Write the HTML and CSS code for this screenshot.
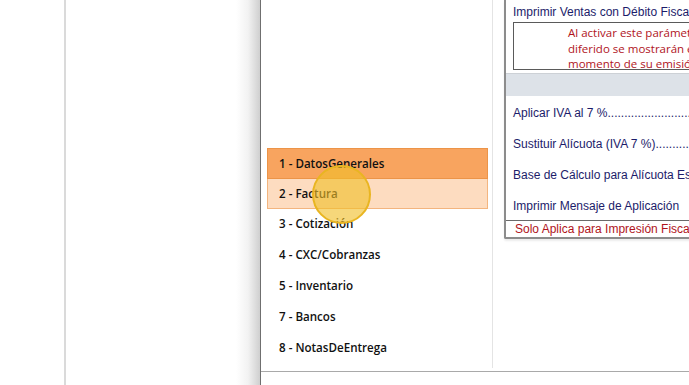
FILE: index.html
```html
<!DOCTYPE html>
<html lang="es">
<head>
    <meta charset="UTF-8">
    <meta name="viewport" content="width=device-width, initial-scale=1.0">
    <title>Configuración</title>
    <link rel="stylesheet" href="styles.css">
</head>
<body>
    <div id="desktop">
        <div id="backdrop">
            <div class="guide"></div>
        </div>
        <div id="window">
            <div id="content">
                <div id="nav">
                    <div id="module-list">
                        <div class="module active">1 - DatosGenerales</div>
                        <div class="module hover">2 - Factura</div>
                        <div class="module">3 - Cotización</div>
                        <div class="module">4 - CXC/Cobranzas</div>
                        <div class="module">5 - Inventario</div>
                        <div class="module">7 - Bancos</div>
                        <div class="module">8 - NotasDeEntrega</div>
                    </div>
                    <div id="cursor"></div>
                </div>
                <div id="settings">
                    <div id="panel">
                        <div class="option title">Imprimir Ventas con Débito Fiscal Diferido</div>
                        <div class="notice">
                            <p>Al activar este parámetro las ventas con débito fiscal</p>
                            <p>diferido se mostrarán en el libro de ventas al</p>
                            <p>momento de su emisión</p>
                        </div>
                        <div class="band"></div>
                        <div class="option row">Aplicar IVA al 7 %..............................................</div>
                        <div class="option row">Sustituir Alícuota (IVA 7 %).................................</div>
                        <div class="option row">Base de Cálculo para Alícuota Especial</div>
                        <div class="option row">Imprimir Mensaje de Aplicación</div>
                        <div class="fiscal-note">Solo Aplica para Impresión Fiscal</div>
                    </div>
                </div>
            </div>
            <div id="footer"></div>
        </div>
    </div>
</body>
</html>
```

FILE: styles.css
```css
body {
    margin: 0;
    background: #ffffff;
    font-family: "Liberation Sans", Arial, sans-serif;
    overflow: hidden;
}
#desktop {
    display: flex;
    height: 385px;
    width: 689px;
    overflow: hidden;
}
#backdrop {
    width: 260px;
    flex-shrink: 0;
    background: linear-gradient(90deg, #ffffff 0, #ffffff 236px, #f2f2f2 248px, #cfcfcf 260px);
}
.guide {
    margin-left: 64px;
    width: 2px;
    height: 100%;
    background: #dadada;
}
#window {
    flex: 1;
    min-width: 0;
    display: flex;
    flex-direction: column;
    border-left: 1px solid #6f6f6f;
    background: #ffffff;
}
#content {
    height: 371px;
    display: flex;
    border-bottom: 1px solid #a9a9a9;
    overflow: hidden;
}
#footer {
    flex: 1;
    background: #ffffff;
}
#nav {
    position: relative;
    width: 232px;
    flex-shrink: 0;
    padding: 148px 4px 0 6px;
    box-sizing: border-box;
    border-right: 1px solid #e4e4e4;
    height: 368px;
}
#module-list {
    display: flex;
    flex-direction: column;
}
.module {
    height: 31px;
    line-height: 30px;
    padding-left: 11px;
    font-family: "Open Sans", "Noto Sans", sans-serif;
    font-weight: 600;
    font-size: 11.6px;
    color: #111111;
    border: 1px solid transparent;
    border-top: none;
    box-sizing: border-box;
}
.module.active {
    background: #f8a45f;
    border: 1px solid #ec9448;
    height: 31px;
}
.module.hover {
    background: #fddcc0;
    border-color: #f3b57f;
    height: 30px;
    line-height: 30px;
}
#cursor {
    position: absolute;
    left: 51px;
    top: 165px;
    width: 59px;
    height: 59px;
    border-radius: 50%;
    background: rgba(240, 190, 40, 0.62);
    border: 2px solid #e9b521;
    box-sizing: border-box;
}
#settings {
    flex: 1;
    min-width: 0;
    padding-left: 11px;
}
#panel {
    width: 300px;
    border-left: 2px solid #8c8c8c;
    border-bottom: 2px solid #8c8c8c;
    border-bottom-left-radius: 2px;
    box-shadow: 0 2px 2px rgba(0, 0, 0, 0.08);
}
.option {
    color: #1c1c6a;
    font-size: 12px;
    padding-left: 7px;
    white-space: nowrap;
    overflow: hidden;
}
.title {
    height: 22px;
    line-height: 24px;
}
.notice {
    margin-left: 7px;
    height: 44px;
    border: 1px solid #5a5a5a;
    padding: 2px 0 0 54px;
    font-family: "Open Sans", "Noto Sans", sans-serif;
    font-size: 11.5px;
    line-height: 15.5px;
    color: #b0141c;
    white-space: nowrap;
    overflow: hidden;
}
.notice p {
    margin: 0;
}
.band {
    margin-top: 3px;
    height: 22px;
    background: #dde2e8;
    border-top: 1px solid #cdd1d6;
}
.row {
    height: 31px;
    line-height: 34px;
}
.fiscal-note {
    height: 16px;
    line-height: 16px;
    border-top: 1px solid #6a6a6a;
    padding-left: 9px;
    font-size: 12px;
    color: #b0141c;
    white-space: nowrap;
    overflow: hidden;
}
```
